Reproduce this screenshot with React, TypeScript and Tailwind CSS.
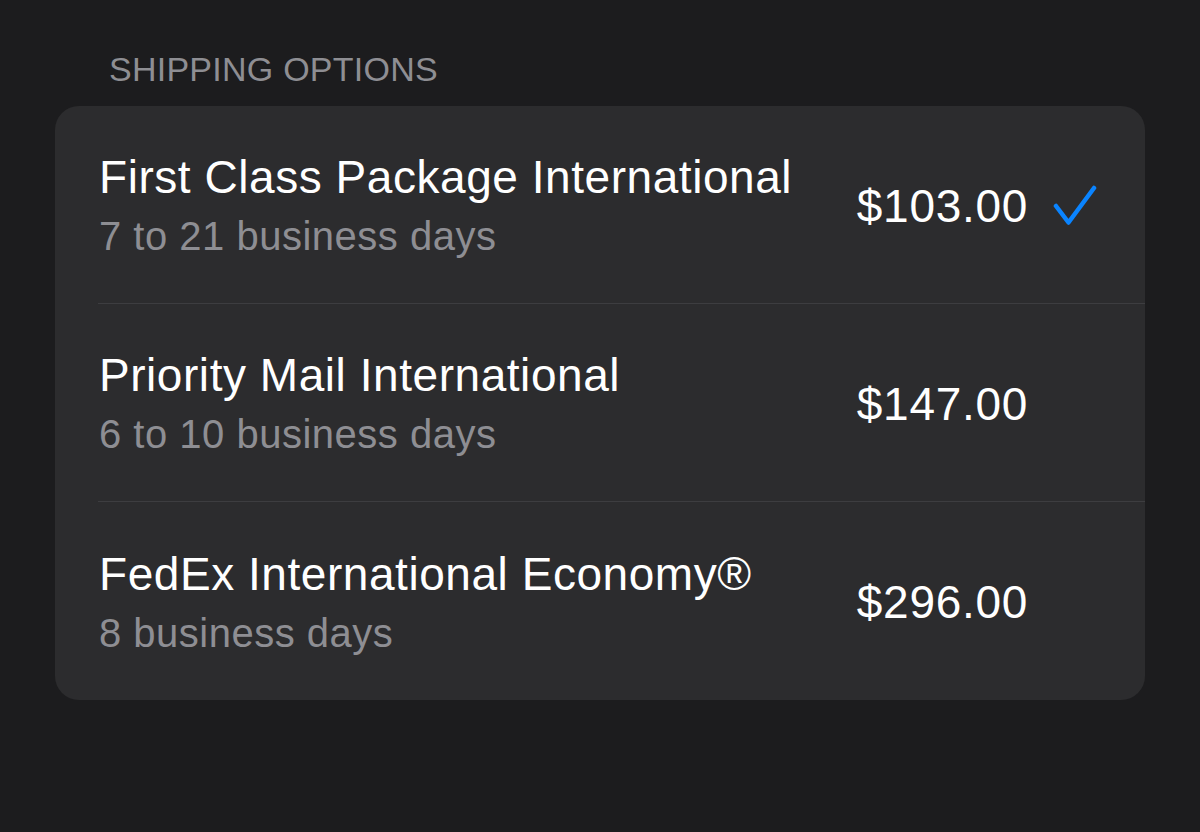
import React from "react";

interface ShippingOption {
  id: number;
  name: string;
  eta: string;
  price: string;
  selected?: boolean;
}

const options: ShippingOption[] = [
  { id: 1, name: "First Class Package International", eta: "7 to 21 business days", price: "$103.00", selected: true },
  { id: 2, name: "Priority Mail International", eta: "6 to 10 business days", price: "$147.00" },
  { id: 3, name: "FedEx International Economy®", eta: "8 business days", price: "$296.00" },
];

const CheckIcon = () => (
  <svg width="44" height="42" viewBox="0 0 44 42" fill="none">
    <path
      d="M3 21 L15.5 37.5 L41 3"
      stroke="#0a84ff"
      strokeWidth="4.5"
      strokeLinecap="round"
      strokeLinejoin="round"
    />
  </svg>
);

const App = () => {
  return (
    <div className="min-h-[832px] w-full bg-[#1c1c1e] px-[55px] font-['Liberation_Sans',Arial,sans-serif]">
      {/* Section header */}
      <h2 className="pt-[49px] pl-[54px] mb-[17px] text-[34px] leading-[40px] text-[#8e8e93] tracking-[0.25px]">
        SHIPPING OPTIONS
      </h2>

      {/* Options card */}
      <div className="bg-[#2c2c2e] rounded-[24px] pl-[43px] overflow-hidden">
        {options.map((opt, i) => (
          <div
            key={opt.id}
            className={`flex items-center h-[198px] pr-[48px] ${
              i < options.length - 1 ? "border-b border-[#3d3d40]" : ""
            }`}
          >
            <div className="flex flex-col flex-1 pl-[1px]">
              <span className="text-[46px] leading-[54px] text-white tracking-[0.55px]">{opt.name}</span>
              <span className="mt-[9px] text-[40px] leading-[46px] text-[#8e8e93] tracking-[0.5px]">
                {opt.eta}
              </span>
            </div>
            <span className="text-[46px] leading-[54px] text-white tracking-[0.7px] mt-[2px]">{opt.price}</span>
            <div className="w-[44px] h-[42px] ml-[25px] mt-[2px] flex items-center justify-center">
              {opt.selected && <CheckIcon />}
            </div>
          </div>
        ))}
      </div>
    </div>
  );
};

export default App;
